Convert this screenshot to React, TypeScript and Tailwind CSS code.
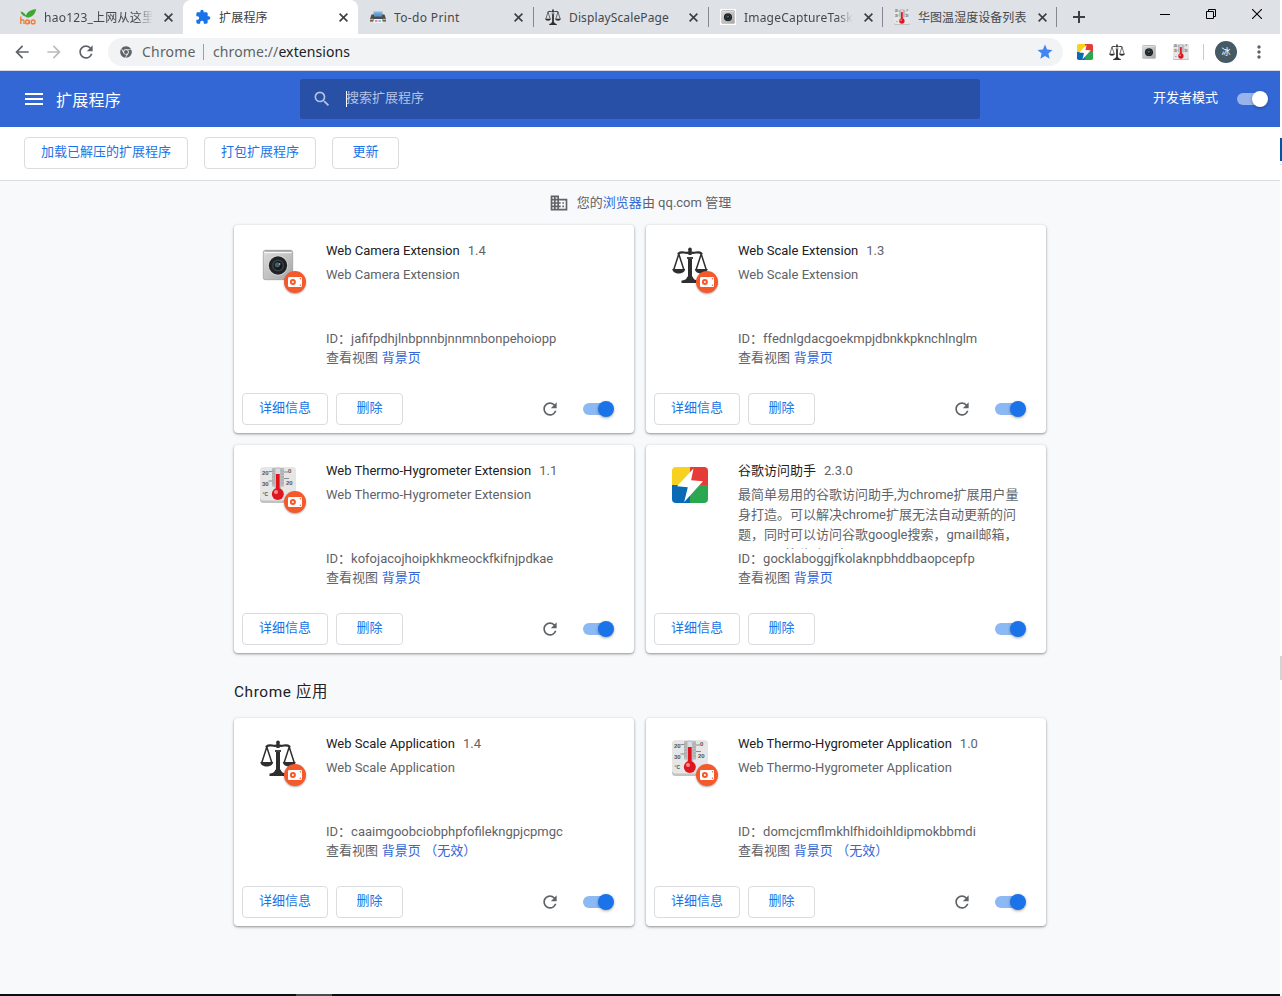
import type { ReactNode } from "react";
import {
  MdArrowBack,
  MdArrowForward,
  MdDomain,
  MdExtension,
  MdMenu,
  MdMoreVert,
  MdRefresh,
  MdSearch,
  MdStar,
} from "react-icons/md";
import { FaChrome } from "react-icons/fa";

function ScaleIcon({ className }: { className: string }) {
  return (
    <svg viewBox="0 0 36 36" className={className} fill="none" stroke="#2e2e2e" strokeLinejoin="round">
      <circle cx="18" cy="2.2" r="1.8" fill="#2e2e2e" stroke="none" />
      <path d="M18 3v5" strokeWidth="3.2" />
      <path d="M6.500 6.500c3.500-3 6.500.6 11.500-1.200 5 1.800 8-1.800 11.500 1.200" strokeWidth="2.200" strokeLinecap="round" />
      <path d="M18 12v20" strokeWidth="4" />
      <path d="M15 11h6" strokeWidth="1.800" />
      <path d="M6.800 7L1.800 22.500M6.800 7l5 15.500M29.200 7l-5 15.500M29.200 7l5 15.500" strokeWidth="1.500" />
      <path d="M.3 22h12.900c-.6 6-12.300 6-12.900 0zM22.800 22h12.900c-.6 6-12.300 6-12.900 0z" fill="#2e2e2e" stroke="none" />
      <path d="M9.500 36v-2.400c2.500-.3 4.800-.8 6-4.100h5c1.200 3.300 3.500 3.800 6 4.100V36z" fill="#2e2e2e" stroke="none" />
    </svg>
  );
}

function CameraIcon({ className }: { className: string }) {
  return (
    <svg viewBox="0 0 36 36" className={className}>
      <defs>
        <linearGradient id="camBody" x1="0" y1="0" x2="1" y2="1">
          <stop offset="0" stopColor="#dcdcdc" />
          <stop offset="0.5" stopColor="#c2c2c2" />
          <stop offset="1" stopColor="#a4a4a4" />
        </linearGradient>
      </defs>
      <rect x="3.300" y="3.300" width="29.400" height="29.400" rx="2" fill="url(#camBody)" stroke="#9b9b9b" strokeWidth=".7" />
      <path d="M5 4h26" stroke="#8e8e8e" strokeWidth=".9" />
      <path d="M4.500 5.600h27" stroke="#f8f8f8" strokeWidth="1.200" />
      <circle cx="18" cy="18.500" r="10" fill="#dedede" />
      <circle cx="18" cy="18.500" r="9.200" fill="#202224" />
      <circle cx="18" cy="18.500" r="6" fill="#3c4145" />
      <circle cx="18" cy="18.500" r="4.500" fill="#15191c" />
      <circle cx="17.300" cy="17.800" r="2.600" fill="#40606c" />
      <circle cx="19.600" cy="17" r=".9" fill="#8fa3ad" />
    </svg>
  );
}

function ThermoIcon({ className }: { className: string }) {
  return (
    <svg viewBox="0 0 36 36" className={className}>
      <rect x="0" y="1" width="36" height="35" rx="3.500" fill="#c2c2c2" />
      <rect x="0" y="0" width="36" height="33.500" rx="3.500" fill="#e6e6e6" />
      <rect x="12" y="1" width="12" height="18.500" fill="#bcbcbc" />
      <path d="M8.500 4.500h4M8.500 14h4M24 5h4M24 11.500h5" stroke="#8a8a8a" strokeWidth="1" />
      <path d="M12 4h12M12 7h12M12 10h12M12 13h12M12 16h12" stroke="#a2a2a2" strokeWidth=".8" />
      <rect x="15" y="1" width="5.600" height="24" rx="1.500" fill="#d8dbe2" stroke="#a9a9ae" strokeWidth=".6" />
      <rect x="15.900" y="7" width="3.800" height="18" fill="#e0131a" />
      <circle cx="17.800" cy="27" r="6" fill="#de1620" />
      <circle cx="16" cy="25" r="2" fill="#ff8b8b" />
      <g fill="#555" fontFamily="Liberation Sans, sans-serif" fontWeight="700" fontSize="6">
        <text x="2" y="7.800">20</text>
        <text x="2" y="19">30</text>
        <text x="2.500" y="29" fontSize="5">°C</text>
        <text x="28" y="5.500">0</text>
        <text x="26" y="18">20</text>
      </g>
    </svg>
  );
}

function BoltIcon({ className }: { className: string }) {
  return (
    <svg viewBox="0 0 36 36" className={className}>
      <path d="M4 0h14v18H0V4a4 4 0 0 1 4-4z" fill="#f6d21f" />
      <path d="M18 0h14a4 4 0 0 1 4 4v14H18z" fill="#e53c37" />
      <path d="M0 18h18v18H4a4 4 0 0 1-4-4z" fill="#0a6ab5" />
      <path d="M18 18h18v14a4 4 0 0 1-4 4H18z" fill="#2ba84f" />
      <path d="M21.500 1.500L5 19.200l10.800 1L12.200 35 31 14.300l-11.900-1z" fill="#fff" />
    </svg>
  );
}

function HaoIcon() {
  return (
    <svg viewBox="0 0 16 16" className="size-4 overflow-visible">
      <path d="M5.500 7.500C3.300 7 1.200 5.400.5 2.500c2.700.4 4.500 2 5.300 3.900C7.500 2.600 11 .5 16.200 0 15.300 5 12 8.600 6.800 8.600z" fill="#3fa535" />
      <path d="M.8 7.500v7.500M.8 11.800c.8-1.600 3.200-1.500 3.200.4V15M9 12.900a1.700 1.900 0 1 1-3.400 0 1.700 1.900 0 0 1 3.400 0zM9.300 11v4M15 12.900a1.900 1.900 0 1 1-3.800 0 1.900 1.900 0 0 1 3.800 0z" fill="none" stroke="#f47d3a" strokeWidth="1.400" />
    </svg>
  );
}

function PrinterIcon() {
  return (
    <svg viewBox="0 0 16 16" className="size-4">
      <path d="M3.500 2.500h9V8h-9z" fill="#7fb2dc" />
      <path d="M1.500 5.500h13L16 10v2.500H0V10z" fill="#4a4b50" />
      <path d="M4 4.500h8v3H4z" fill="#5b9bd0" />
      <path d="M0 9.800h3.500v1.400H0zM12.500 9.800H16v1.400h-3.500z" fill="#e6b04a" />
      <path d="M3.800 10h8.400l.6 4H3.200z" fill="#f2f4f7" />
      <path d="M5 11h2.500v2H5z" fill="#ee8c9b" />
      <path d="M8.500 11H11v2H8.500z" fill="#7cc3e8" />
    </svg>
  );
}

function Badge() {
  return (
    <span className="absolute top-[24px] left-[24px] flex size-[22px] items-center justify-center rounded-full bg-[#f4592b] shadow-[0_1px_2px_rgba(0,0,0,0.35)]">
      <svg viewBox="0 0 14 10" className="h-[10px] w-[14px]">
        <rect x="0" y="0" width="14" height="10" rx="1.200" fill="#fff" />
        <circle cx="4.900" cy="5" r="3" fill="#f4592b" />
        <circle cx="4.900" cy="5" r="1" fill="#fff" />
        <circle cx="12.400" cy="1.700" r=".7" fill="#f4592b" />
        <circle cx="12.400" cy="8.300" r=".7" fill="#f4592b" />
      </svg>
    </span>
  );
}

type TabInfo = {
  icon: ReactNode;
  title: string;
  width: string;
  text: string;
  active?: boolean;
  line?: boolean;
  faded?: boolean;
};

const tabs: TabInfo[] = [
  { icon: <HaoIcon />, title: "hao123_上网从这里开始", width: "w-[175px]", text: "tracking-[0.25px]", faded: true },
  { icon: <MdExtension className="size-4 text-[#1a73e8]" />, title: "扩展程序", width: "w-[175px]", text: "tracking-[0.2px]", active: true },
  { icon: <PrinterIcon />, title: "To-do Print", width: "w-[175px]", text: "tracking-[0.35px]", line: true },
  { icon: <ScaleIcon className="size-4" />, title: "DisplayScalePage", width: "w-[175px]", text: "tracking-[0.12px]", line: true },
  {
    icon: (
      <span className="flex size-4 bg-white">
        <CameraIcon className="size-4" />
      </span>
    ),
    title: "ImageCaptureTaskPage",
    width: "w-[174px]",
    text: "tracking-[0.2px]",
    line: true,
    faded: true,
  },
  { icon: <ThermoIcon className="size-4" />, title: "华图温湿度设备列表", width: "w-[174px]", text: "tracking-[0.05px]", line: true },
];

function Tab({ icon, title, width, text, active, line, faded }: TabInfo) {
  return (
    <div
      className={`relative flex h-full shrink-0 items-center pl-3 ${width} ${active ? "rounded-t-lg bg-white text-[#3c4043]" : "text-[#45494d]"}`}
    >
      <span className="size-4 shrink-0">{icon}</span>
      <span
        className={`ml-2 w-[109px] shrink-0 overflow-hidden pt-px text-[12px] whitespace-nowrap ${faded ? "[mask-image:linear-gradient(to_right,black_85%,transparent)]" : ""} ${text}`}
      >
        {title}
      </span>
      <svg viewBox="0 0 9 9" className="ml-[10.500px] size-[9px] shrink-0" stroke="#3c4043" strokeWidth="1.600">
        <path d="M.6.6l7.800 7.800M8.400.6L.6 8.400" />
      </svg>
      {line && <span className="absolute top-[7px] -right-px h-5 w-px bg-[#85888c]" />}
    </div>
  );
}

function TabStrip() {
  return (
    <div className="flex h-[34px] bg-[#dee1e6] pl-2 font-['Noto_Sans','Noto_Sans_CJK_SC',sans-serif]">
      {tabs.map((t) => (
        <Tab key={t.title} {...t} />
      ))}
      <svg viewBox="0 0 12 12" className="mt-[11px] ml-[17px] size-3" stroke="#3c4043" strokeWidth="2">
        <path d="M6 0v12M0 6h12" />
      </svg>
      <div className="mt-[9px] ml-auto flex w-[120px] justify-between pr-[18px]">
        <svg viewBox="0 0 10 10" className="size-[10px]" stroke="#000">
          <path d="M0 5.500h10" />
        </svg>
        <svg viewBox="0 0 10 10" className="size-[10px]" stroke="#000" fill="none">
          <path d="M2.500 2V.5h7v7H8M.5 2.500h7v7h-7z" />
        </svg>
        <svg viewBox="0 0 10 10" className="size-[10px]" stroke="#000" strokeWidth="1.100">
          <path d="M0 0l10 10M10 0L0 10" />
        </svg>
      </div>
    </div>
  );
}

function AddressBar() {
  return (
    <div className="flex h-9 items-center bg-white font-['Noto_Sans','Noto_Sans_CJK_SC',sans-serif] text-[#5f6368]">
      <MdArrowBack className="ml-3 size-5" />
      <MdArrowForward className="ml-3 size-5 text-[#babcbe]" />
      <MdRefresh className="ml-3 size-5" />
      <div className="ml-3 flex h-7 w-[955px] items-center rounded-full bg-[#f1f3f4] pl-3 text-[14px]">
        <FaChrome className="size-3" />
        <span className="ml-[10px] w-[61px] pb-[2px] tracking-[0.2px]">Chrome</span>
        <span className="h-4 w-px bg-[#9aa0a6]" />
        <span className="ml-[9px] pb-[2px] tracking-[0.1px]">
          chrome://<span className="text-[#202124]">extensions</span>
        </span>
        <MdStar className="mr-[9px] ml-auto size-[18px] text-[#4285f4]" />
      </div>
      <BoltIcon className="ml-[14px] size-4" />
      <ScaleIcon className="ml-4 size-4" />
      <CameraIcon className="ml-4 size-4" />
      <ThermoIcon className="ml-4 size-4" />
      <span className="ml-[14px] h-4 w-px bg-[#c8cacd]" />
      <span className="ml-[11px] flex size-[22px] items-center justify-center rounded-full bg-[#455a64] text-[9px] text-white">
        冰
      </span>
      <MdMoreVert className="ml-3 size-5" />
    </div>
  );
}

function Toggle({ light }: { light?: boolean }) {
  return (
    <span className={`relative block h-3 w-[28px] rounded-full ${light ? "bg-[#99b3eb]" : "bg-[#8cb8f3]"}`}>
      <span
        className={`absolute -top-[2px] left-[15px] size-4 rounded-full shadow-[0_1px_3px_rgba(0,0,0,0.35)] ${light ? "bg-white" : "bg-[#1a73e8]"}`}
      />
    </span>
  );
}

function Button({ children, width }: { children: ReactNode; width: string }) {
  return (
    <button
      className={`flex h-8 items-center justify-center rounded border border-[#dadce0] bg-white pb-[2px] text-[13px] text-[#1a73e8] ${width}`}
    >
      {children}
    </button>
  );
}

type Item = {
  name: string;
  version: string;
  description: string;
  id: string;
  icon: ReactNode;
  unpacked: boolean;
  inactive?: boolean;
};

const icon36 = "size-9";

const extensions: Item[] = [
  { name: "Web Camera Extension", version: "1.4", description: "Web Camera Extension", id: "jafifpdhjlnbpnnbjnnmnbonpehoiopp", icon: <CameraIcon className={icon36} />, unpacked: true },
  { name: "Web Scale Extension", version: "1.3", description: "Web Scale Extension", id: "ffednlgdacgoekmpjdbnkkpknchlnglm", icon: <ScaleIcon className={icon36} />, unpacked: true },
  { name: "Web Thermo-Hygrometer Extension", version: "1.1", description: "Web Thermo-Hygrometer Extension", id: "kofojacojhoipkhkmeockfkifnjpdkae", icon: <ThermoIcon className={icon36} />, unpacked: true },
  { name: "谷歌访问助手", version: "2.3.0", description: "最简单易用的谷歌访问助手,为chrome扩展用户量身打造。可以解决chrome扩展无法自动更新的问题，同时可以访问谷歌google搜索，gmail邮箱，google+等谷歌服务", id: "gocklaboggjfkolaknpbhddbaopcepfp", icon: <BoltIcon className={icon36} />, unpacked: false },
];

const apps: Item[] = [
  { name: "Web Scale Application", version: "1.4", description: "Web Scale Application", id: "caaimgoobciobphpfofilekngpjcpmgc", icon: <ScaleIcon className={icon36} />, unpacked: true, inactive: true },
  { name: "Web Thermo-Hygrometer Application", version: "1.0", description: "Web Thermo-Hygrometer Application", id: "domcjcmflmkhlfhidoihldipmokbbmdi", icon: <ThermoIcon className={icon36} />, unpacked: true, inactive: true },
];

function Card({ item }: { item: Item }) {
  return (
    <div className="flex h-[208px] w-[400px] flex-col rounded bg-white text-[13px] leading-5 text-[#5f6368] shadow-[0_1px_2px_rgba(60,64,67,0.4),0_1px_3px_1px_rgba(60,64,67,0.15)]">
      <div className="flex h-[168px] pl-[26px]">
        <div className="relative mt-[22px] size-9 shrink-0">
          {item.icon}
          {item.unpacked && <Badge />}
        </div>
        <div className="ml-[30px] w-[284px] pt-4">
          <div className="flex h-6 gap-2 whitespace-nowrap">
            <span className="text-[#202124]">{item.name}</span>
            <span>{item.version}</span>
          </div>
          <div className="h-16 overflow-hidden">{item.description}</div>
          <div className="h-5 whitespace-nowrap">ID：{item.id}</div>
          <div className="h-5 leading-[18px] whitespace-nowrap">
            查看视图 <a className="ml-[0.5px] text-[#3367d6]">背景页{item.inactive && <span className="ml-[3.500px]">（无效）</span>}</a>
          </div>
        </div>
      </div>
      <div className="flex h-8 items-center pl-2">
        <Button width="w-[86px]">详细信息</Button>
        <span className="w-2" />
        <Button width="w-[67px]">删除</Button>
        <div className="mr-[23px] ml-auto flex items-center gap-[23px]">
          {item.unpacked && <MdRefresh className="size-5" />}
          <Toggle />
        </div>
      </div>
    </div>
  );
}

export default function App() {
  return (
    <div className="flex h-[996px] w-[1282px] overflow-hidden bg-white font-[Roboto,'Noto_Sans_CJK_SC',sans-serif]">
      <div className="flex w-[1280px] flex-col">
        <TabStrip />
        <AddressBar />
        <header className="flex h-[57px] items-center border-t border-[#d5d9e0] bg-[#3367d6] text-white">
          <MdMenu className="ml-[22px] size-6" />
          <h1 className="ml-[10px] w-[244px] pt-[4px] text-[16px] tracking-[0.25px]">扩展程序</h1>
          <div className="flex h-10 w-[680px] items-center rounded-[2px] bg-[#2850a7] pl-3 text-[#b4c3e4]">
            <MdSearch className="size-5" />
            <span className="ml-[14px] h-4 w-px bg-white" />
            <span className="-ml-px pb-[2px] text-[13px]">搜索扩展程序</span>
          </div>
          <span className="mr-[19px] ml-auto pb-[2px] text-[13px]">开发者模式</span>
          <div className="mr-[15px]">
            <Toggle light />
          </div>
        </header>
        <div className="flex h-[54px] gap-4 border-b border-[#dadce0] bg-white pt-[10px] pl-6">
          <Button width="w-[164px]">加载已解压的扩展程序</Button>
          <Button width="w-[112px]">打包扩展程序</Button>
          <Button width="w-[67px]">更新</Button>
        </div>
        <main className="flex grow flex-col items-center bg-[#f8f9fb]">
          <div className="flex h-11 items-center text-[13px] text-[#5f6368]">
            <MdDomain className="mr-2 size-5" />
            <span>
              您的<a className="text-[#3367d6]">浏览器</a>由 qq.com 管理
            </span>
          </div>
          <div className="grid grid-cols-2 gap-3">
            {extensions.map((e) => (
              <Card key={e.id} item={e} />
            ))}
          </div>
          <h2 className="flex h-[65px] w-[812px] items-center pt-[14px] text-[15.400px] tracking-[0.600px] text-[#202124]">Chrome 应用</h2>
          <div className="grid grid-cols-2 gap-3">
            {apps.map((e) => (
              <Card key={e.id} item={e} />
            ))}
          </div>
        </main>
        <div className="flex h-[2px] bg-[#0b0f14] pl-[296px]">
          <span className="w-9 bg-[#4a4b4d]" />
        </div>
      </div>
      <div className="flex w-[2px] flex-col">
        <span className="mt-[138px] h-[23px] bg-[#0055a5]" />
        <span className="mt-[3px] h-px bg-[#d8dbe0]" />
        <span className="mt-[491px] h-6 bg-[#d4d4d4]" />
      </div>
    </div>
  );
}
